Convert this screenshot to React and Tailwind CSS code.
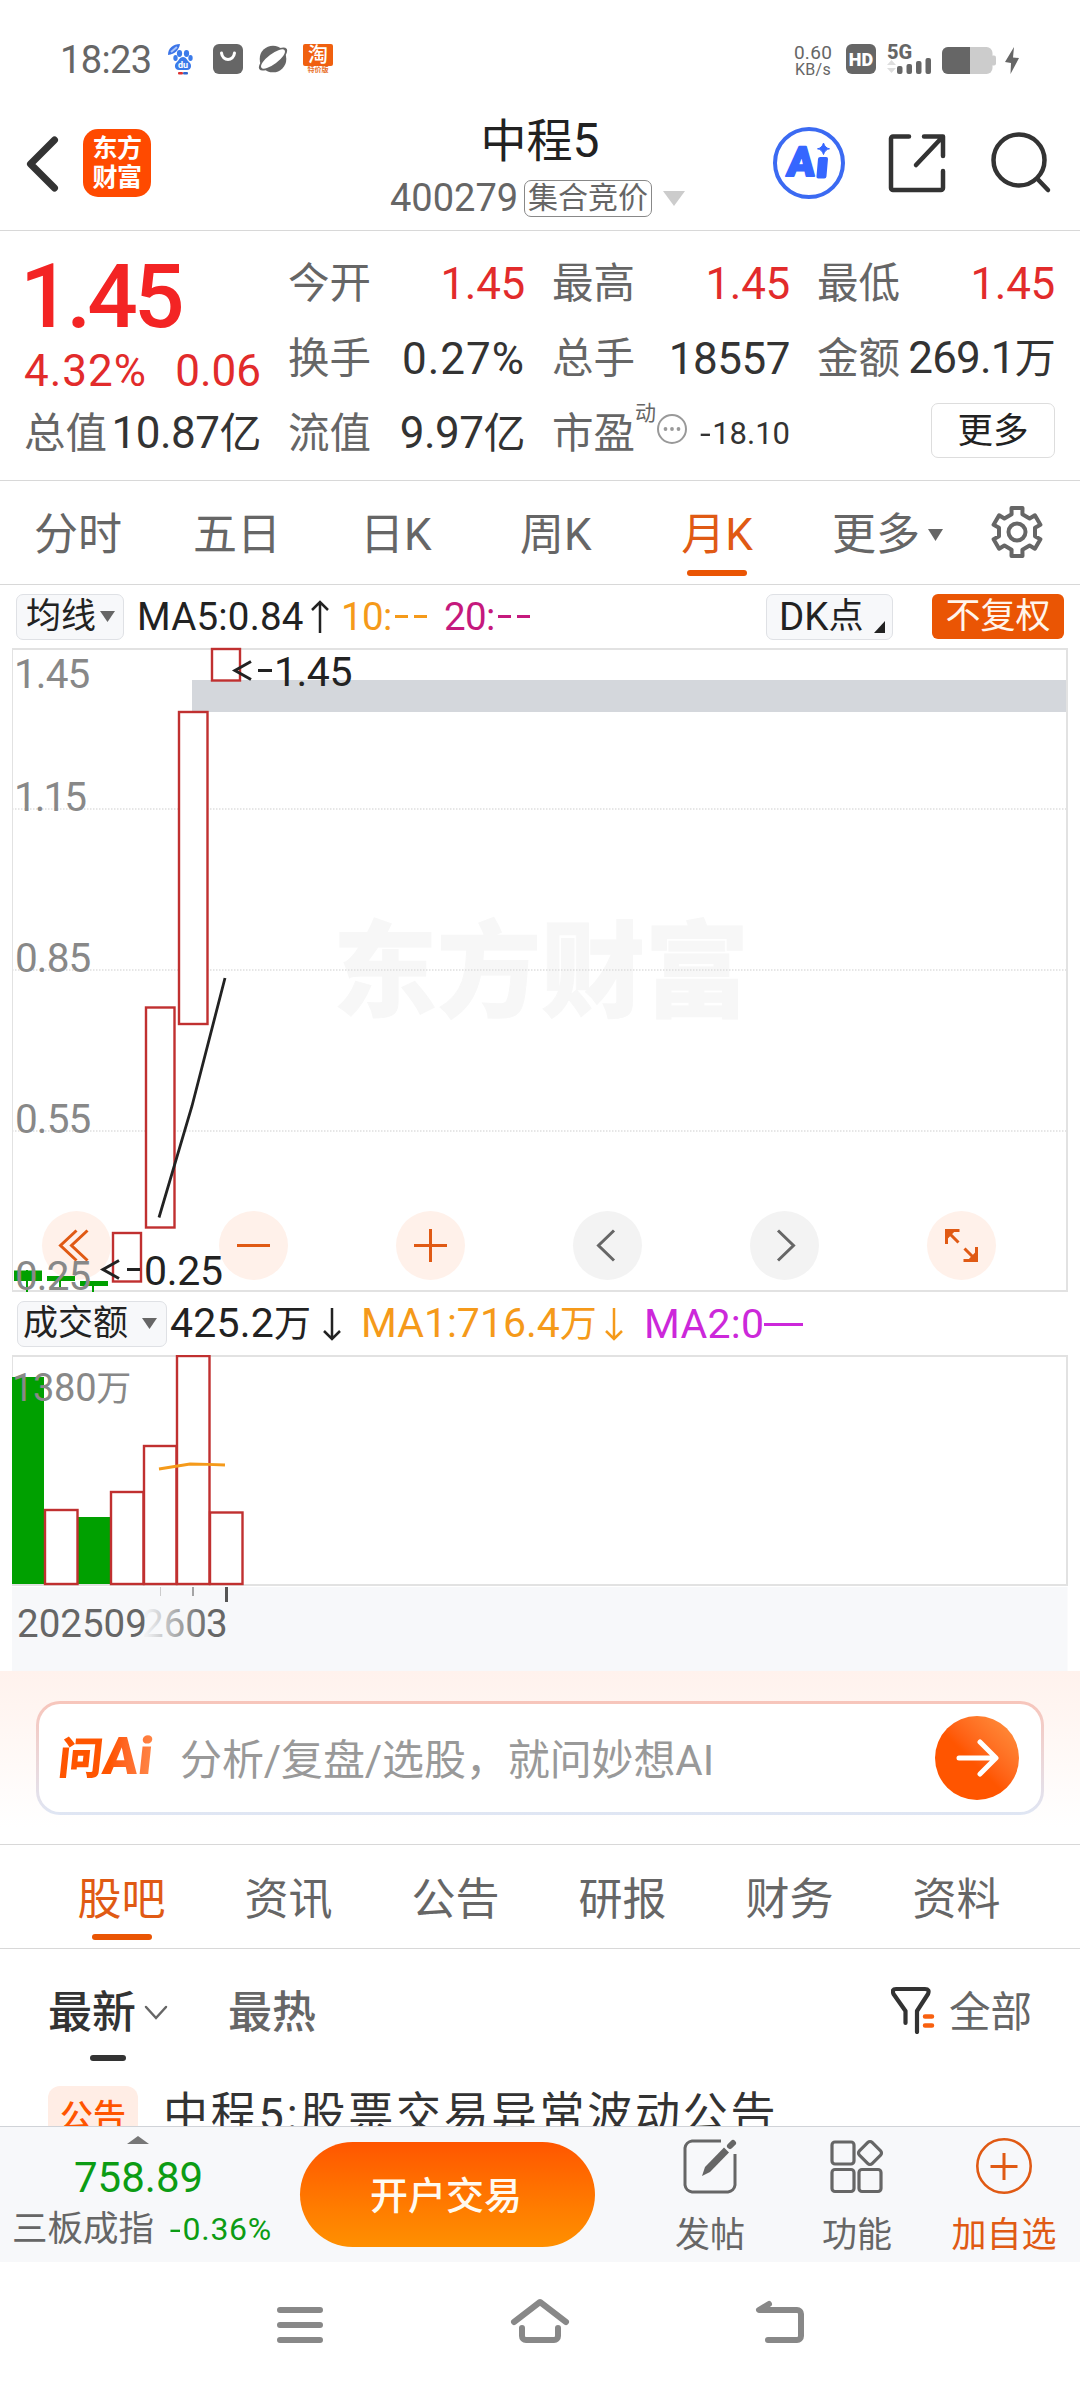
import React from "react";

function Triangle({ className, points = "0,0 15,0 7.5,11", w = 15, h = 11, fill = "#666" }) {
  return (
    <svg width={w} height={h} className={className}>
      <polygon points={points} fill={fill} />
    </svg>
  );
}

function StatusBar() {
  return (
    <div className="flex h-[110px] shrink-0 items-start pl-[60px] pt-[44px] text-[#666]">
      <div className="mt-px w-[108px] text-[38px] leading-[30px] tracking-[-0.6px]">18:23</div>
      <svg width="25" height="31" viewBox="0 0 25 31" className="shrink-0 overflow-visible">
        <path d="M0 11C0 4 5 0 12 0C11 6 7 10 0 11Z" fill="#3b74e8" />
        <path d="M3 8L9 3" stroke="#a9c4fa" strokeWidth="2" />
        <g fill="#3b7bea">
          <ellipse cx="11.5" cy="9.5" rx="2.6" ry="3.4" />
          <ellipse cx="18.5" cy="9.5" rx="2.6" ry="3.4" />
          <ellipse cx="7.5" cy="14" rx="2.2" ry="3" />
          <ellipse cx="22.5" cy="14" rx="2.2" ry="3" />
          <path d="M15 13C18 13 19 16 21 18C24 20 24 26 19 26C16 26 14 26 11 26C6 26 6 20 9 18C11 16 12 13 15 13Z" />
        </g>
        <text x="15" y="24" fontSize="9" fontWeight="700" textAnchor="middle" fill="#fff">du</text>
        <rect x="10" y="28" width="5" height="2.500" rx="1" fill="#d33" />
        <rect x="15" y="28" width="5" height="2.500" rx="1" fill="#36c" />
      </svg>
      <svg width="30" height="30" className="ml-[20px] shrink-0">
        <rect width="30" height="30" rx="6" fill="#666" />
        <path d="M8.500 9C9.500 17.500 20.500 17.500 21.500 9" stroke="#fff" strokeWidth="3" fill="none" strokeLinecap="round" />
      </svg>
      <svg width="30" height="30" viewBox="0 0 30 30" className="ml-[15px] shrink-0">
        <circle cx="15" cy="15" r="13.300" fill="#666" />
        <ellipse cx="15" cy="15" rx="17" ry="6.500" transform="rotate(-37 15 15)" fill="#666" />
        <ellipse cx="15" cy="15" rx="14.500" ry="5" transform="rotate(-37 15 15)" fill="#fff" />
      </svg>
      <div className="ml-[15px] flex w-[30px] flex-col items-center">
        <div className="h-[22px] w-[30px] rounded-[2px] bg-[#f0600f] text-center text-[20px] font-medium leading-[22px] text-white">淘</div>
        <div className="whitespace-nowrap text-[7px] font-bold leading-[9px] text-[#e8702a]">特价版</div>
      </div>
      <div className="ml-[459px] w-[42px] text-center">
        <div className="text-[19px] leading-[18px] tracking-[0.3px]">0.60</div>
        <div className="text-[16px] leading-[16px] tracking-[0.3px]">KB/s</div>
      </div>
      <div className="ml-[12px] flex h-[30px] w-[30px] items-center justify-center rounded-[6px] bg-[#666] text-[18px] font-black text-white">HD</div>
      <svg width="46" height="31" viewBox="0 0 46 31" className="ml-[11px] shrink-0 overflow-visible">
        <text x="0" y="14.500" fontSize="20" fontWeight="800" fill="#666">5G</text>
        <polygon points="0,21 9,21 4.500,16" fill="#ddd" />
        <polygon points="0,24 9,24 4.500,29" fill="#ddd" />
        <g fill="#666">
          <rect x="10" y="22" width="5.500" height="8" rx="2" />
          <rect x="19.500" y="20" width="5.500" height="10" rx="2" />
          <rect x="29" y="17" width="5.500" height="13" rx="2" />
          <rect x="38.500" y="14" width="5.500" height="16" rx="2" />
        </g>
      </svg>
      <svg width="55" height="28" className="ml-[9px] mt-[3px] shrink-0">
        <rect x="0" y="0" width="50.500" height="27" rx="6" fill="#ccc" />
        <rect x="49" y="8.500" width="5" height="10" rx="2" fill="#ccc" />
        <path d="M6 0H28V27H6A6 6 0 0 1 0 21V6A6 6 0 0 1 6 0Z" fill="#666" />
      </svg>
      <svg width="14" height="28" className="ml-[8px] mt-[3px] shrink-0">
        <polygon points="9,0 0,15 6,16 5.500,27 14,11 8,10.500" fill="#666" />
      </svg>
    </div>
  );
}

function Header() {
  return (
    <div className="flex h-[121px] shrink-0 items-start border-b border-[#d8d8d8]">
      <div className="flex w-[390px] items-center pl-[25px] pt-[19px]">
        <svg width="36" height="60" className="mt-px">
          <path d="M29.500 6L5.500 30L29.500 54" fill="none" stroke="#333" strokeWidth="7" strokeLinecap="round" strokeLinejoin="round" />
        </svg>
        <div className="ml-[22px] flex h-[68px] w-[68px] flex-col items-center justify-center rounded-[15px] bg-[#ff4a00] text-[25px] font-bold leading-[29px] tracking-[-0.5px] text-white">
          <span>东方</span>
          <span>财富</span>
        </div>
      </div>
      <div className="w-[300px]">
        <div className="h-[60px] text-center text-[46px] leading-[61px] text-[#222]">中程<span className="text-[48px]">5</span></div>
        <div className="mt-[9px] flex h-[38px] items-center text-[#666]">
          <span className="w-[134px] text-[38px] leading-[38px]">400279</span>
          <span className="flex h-[37px] w-[128px] items-center justify-center rounded-[7px] border-[1.5px] border-[#888] text-[30px] leading-[36px]">集合竞价</span>
          <Triangle className="ml-[11px]" points="0,0 22,0 11,15" w={22} h={15} fill="#ccc" />
        </div>
      </div>
      <div className="flex flex-1 items-center pl-[82px] pt-[16px]">
        <svg width="74" height="74" viewBox="0 0 74 74">
          <circle cx="37" cy="37" r="34" fill="none" stroke="#3b6af2" strokeWidth="4" />
          <g transform="translate(14 50) skewX(-5)" fill="#3566ff" stroke="#3566ff" strokeWidth="2" strokeLinejoin="round">
            <text x="0" y="0" fontSize="41" fontWeight="900">A</text>
            <rect x="31.500" y="-18" width="8" height="19.500" rx="1" />
          </g>
          <path d="M51.500 17Q53 22 57.500 22.800Q53 23.500 51.500 28.500Q50 23.500 45.500 22.800Q50 22 51.500 17Z" fill="#3566ff" stroke="#3566ff" />
        </svg>
        <svg width="58" height="60" viewBox="0 0 58 60" className="ml-[42px]">
          <g fill="none" stroke="#333" strokeWidth="4.500" strokeLinecap="round" strokeLinejoin="round">
            <path d="M21 3.500H5A2 2 0 0 0 3 5.500V55A2 2 0 0 0 5 57H53A2 2 0 0 0 55 55V38" />
            <path d="M36 3.500H55V23M54 4.500L28 32" />
          </g>
        </svg>
        <svg width="62" height="62" viewBox="0 0 62 62" className="ml-[44px]">
          <g fill="none" stroke="#333" strokeWidth="4.500" strokeLinecap="round">
            <circle cx="29" cy="28" r="25.500" />
            <path d="M47.500 47L58 58" />
          </g>
        </svg>
      </div>
    </div>
  );
}

function Cell({ label, value, red, wide }) {
  return (
    <div className="flex h-[75px] items-center justify-between whitespace-nowrap leading-[50px]">
      <span className="text-[41.5px] text-[#666]">{label}</span>
      <span className={red ? "text-[44px] tracking-[-0.3px] text-[#e22b2b]" : wide ? "text-[44px] tracking-[1px] text-[#333]" : "text-[44px] tracking-[-0.5px] text-[#333]"}>{value}</span>
    </div>
  );
}

function Quote() {
  return (
    <div className="flex h-[250px] shrink-0 gap-[27px] border-b border-[#d8d8d8] pl-[24px] pt-[15px]">
      <div className="w-[237px]">
        <div className="-ml-[4px] h-[100px] text-[89px] font-medium leading-[101px] tracking-[-4px] text-[#f32424]">1.45</div>
        <div className="flex h-[50px] items-center justify-between text-[44px] leading-[50px] text-[#e22b2b]">
          <span className="tracking-[1px]">4.32%</span>
          <span>0.06</span>
        </div>
        <Cell label="总值" value={<span className="text-[#333]">10.87<span className="text-[42px]">亿</span></span>} />
      </div>
      <div className="w-[237px]">
        <Cell label="今开" value="1.45" red />
        <Cell label="换手" value="0.27%" wide />
        <Cell label="流值" value={<span>9.97<span className="text-[42px]">亿</span></span>} />
      </div>
      <div className="w-[238px]">
        <Cell label="最高" value="1.45" red />
        <Cell label="总手" value="18557" />
        <div className="flex h-[75px] items-center whitespace-nowrap leading-[50px]">
          <span className="text-[41.5px] text-[#666]">市盈</span>
          <span className="mb-[42px] ml-0 text-[21px] leading-[22px] text-[#666]">动</span>
          <svg width="32" height="32" className="mb-[10px]">
            <circle cx="16" cy="16" r="14" fill="none" stroke="#999" strokeWidth="2" />
            <circle cx="9.500" cy="16" r="1.900" fill="#999" />
            <circle cx="16" cy="16" r="1.900" fill="#999" />
            <circle cx="22.500" cy="16" r="1.900" fill="#999" />
          </svg>
          <span className="ml-auto text-[31px] text-[#333]"><span className="mr-[3px] inline-block scale-x-125">-</span>18.10</span>
        </div>
      </div>
      <div className="w-[238px]">
        <Cell label="最低" value="1.45" red />
        <Cell label="金额" value={<span className="tracking-[-0.8px]">269.1<span className="text-[41px]">万</span></span>} />
        <div className="flex h-[69px] items-center justify-end">
          <span className="flex h-[55px] w-[124px] items-center justify-center rounded-[7px] border border-[#ddd] text-[35.5px] leading-[50px] text-[#222]">更多</span>
        </div>
      </div>
    </div>
  );
}

function gearPath() {
  const pts = [];
  for (let i = 0; i < 6; i++) {
    const base = -90 + i * 60;
    for (const [off, r] of [[-17, 18.5], [-13, 24.5], [13, 24.5], [17, 18.5]]) {
      const a = ((base + off) * Math.PI) / 180;
      pts.push(`${(27 + r * Math.cos(a)).toFixed(1)} ${(27 + r * Math.sin(a)).toFixed(1)}`);
    }
  }
  return `M${pts.join("L")}Z`;
}

function PeriodTabs() {
  return (
    <div className="flex h-[104px] shrink-0 items-start border-b border-[#d8d8d8] pt-[22px] text-[44px] leading-[64px] text-[#666]">
      <span className="w-[160px] pl-[34px]">分时</span>
      <span className="w-[160px] pl-[33px]">五日</span>
      <span className="w-[160px] pl-[40px]">日K</span>
      <span className="w-[160px] pl-[40px]">周K</span>
      <span className="flex w-[154px] flex-col items-center text-[#e05a14]">
        <span>月K</span>
        <span className="mt-[3px] h-[6px] w-[60px] rounded-[3px] bg-[#ea5504]" />
      </span>
      <span className="flex w-[196px] items-center pl-[38px]">更多<Triangle className="ml-[8px]" points="0,0 15,0 7.5,12" h={12} /></span>
      <svg width="54" height="54" className="mt-[2px]">
        <path d={gearPath()} fill="none" stroke="#666" strokeWidth="4" strokeLinejoin="round" />
        <circle cx="27" cy="27" r="8.500" fill="none" stroke="#666" strokeWidth="4" />
      </svg>
    </div>
  );
}

function LongArrow({ up, color, className }) {
  return (
    <svg width="20" height="36" className={className}>
      <path d={up ? "M10 34V4M2 11L10 3L18 11" : "M10 2V33M2 25L10 33L18 25"} stroke={color} strokeWidth="2.500" fill="none" />
    </svg>
  );
}

function DashPair() {
  return (
    <span className="flex items-center gap-[6px] pl-[3px]">
      <span className="h-[3px] w-[13px] bg-current" />
      <span className="h-[3px] w-[13px] bg-current" />
    </span>
  );
}

function MaRow() {
  return (
    <div className="flex h-[63px] shrink-0 items-center whitespace-nowrap pl-[16px] text-[38.5px] leading-[46px] text-[#222]">
      <span className="flex h-[46px] w-[108px] items-center rounded-[7px] border border-[#dfe1e5] bg-[#f7f8fa] pl-[9px] text-[35px]">
        均线<Triangle className="ml-[4px]" />
      </span>
      <span className="ml-[13px] w-[170px] tracking-[0.2px]">MA5:0.84</span>
      <LongArrow up color="#222" className="ml-[3px]" />
      <span className="ml-[11px] flex w-[103px] tracking-[-0.6px] text-[#f59a1a]">10:<DashPair /></span>
      <span className="flex tracking-[-0.6px] text-[#c5197d]">20:<DashPair /></span>
      <span className="ml-auto flex h-[46px] w-[127px] items-center rounded-[7px] border border-[#dfe1e5] bg-[#f7f8fa] pl-[12px]">
        DK<span className="text-[35px]">点</span>
        <Triangle className="ml-[11px] mt-[20px]" points="11,0 11,12 0,12" w={11} h={12} fill="#222" />
      </span>
      <span className="ml-[39px] mr-[16px] flex h-[45px] w-[132px] items-center justify-center rounded-[6px] bg-[#ea5504] text-[35px] text-[#fff5ec]">不复权</span>
    </div>
  );
}

const controls = [
  { x: 76.5, warm: true, d: "M0 -15L-16 0L0 15M11 -15L-5 0L11 15" },
  { x: 253.5, warm: true, d: "M-16.500 0H16.500" },
  { x: 430.5, warm: true, d: "M-16.500 0H16.500M0 -16.500V16.500" },
  { x: 607.5, warm: false, d: "M6.500 -15L-9 0L6.500 15" },
  { x: 784.5, warm: false, d: "M-6.500 -15L9 0L-6.500 15" },
  { x: 961.5, warm: true, d: "M-2 -15H-15V-1.500M-15 -15L-3 -3M2 15H15V1.500M15 15L3 3" },
];

function CandleChart() {
  return (
    <svg width="1080" height="644" viewBox="0 648 1080 644" className="shrink-0 overflow-visible">
      <text x="333" y="1009" fontSize="104" fontWeight="900" fill="#f7f7f7" stroke="#f7f7f7" strokeWidth="1">东方财富</text>
      {[809, 970, 1131].map((y) => (
        <line key={y} x1="12" x2="1067" y1={y} y2={y} stroke="#dedede" strokeWidth="1.500" strokeDasharray="1.500 1.500" />
      ))}
      <rect x="192" y="680" width="875" height="32" fill="#d4d7dc" />
      <path d="M12 649H1068M12 1291H1068" stroke="#e2e2e2" strokeWidth="2" />
      <path d="M12.500 648V1292" stroke="#e2e2e2" />
      <path d="M1067 648V1292" stroke="#e2e2e2" strokeWidth="2" />
      {controls.map((c) => (
        <g key={c.x} transform={`translate(${c.x} 1245.500)`}>
          <circle r="34.500" fill={c.warm ? "#fff1ea" : "#f3f3f3"} />
          <path d={c.d} fill="none" stroke={c.warm ? "#e05a14" : "#666"} strokeWidth="3" />
          {c.x > 900 && <path d="M-15.500 -16V-5L-5 -16ZM15.500 16V5L5 16Z" fill="#e05a14" />}
        </g>
      ))}
      <g fill="#00a000">
        <rect x="14" y="1270.500" width="28" height="10.500" />
        <rect x="26" y="1270" width="2" height="22" />
        <rect x="47" y="1276" width="28" height="5" />
        <rect x="59" y="1276" width="2" height="11" />
        <rect x="80" y="1281" width="28" height="5" />
        <rect x="92" y="1281" width="2" height="11" />
      </g>
      <g fill="#fff" stroke="#c03030" strokeWidth="2.400">
        <rect x="212" y="649" width="28" height="31.500" />
        <rect x="179" y="712" width="28.500" height="312" />
        <rect x="146" y="1007.500" width="28.500" height="220" />
        <rect x="113" y="1233" width="28" height="48.500" />
      </g>
      <path d="M159 1217.500L192 1106L225 978" fill="none" stroke="#222" strokeWidth="2.800" />
      <g fontSize="40.500" fill="#888" letterSpacing="-0.900">
        <text x="14" y="688">1.45</text>
        <text x="14" y="811" letterSpacing="-2">1.15</text>
        <text x="15" y="972">0.85</text>
        <text x="15" y="1132.500">0.55</text>
        <text x="15" y="1289.500">0.25</text>
      </g>
      <g fontSize="41" fill="#222">
        <path d="M251 661.500L235 670.500L251 679.500M258 670.500H272" fill="none" stroke="#222" strokeWidth="3" />
        <text x="274" y="686" letterSpacing="-0.500">1.45</text>
        <path d="M119 1260.500L103 1269.500L119 1278.500M127 1269.500H140" fill="none" stroke="#222" strokeWidth="3" />
        <text x="144" y="1284.500" letterSpacing="-0.300">0.25</text>
      </g>
    </svg>
  );
}

function VolumeRow() {
  return (
    <div className="flex h-[63px] shrink-0 items-center whitespace-nowrap pl-[17px] text-[41px] leading-[46px] text-[#222]">
      <span className="flex h-[46px] w-[150px] items-center rounded-[7px] border border-[#dfe1e5] bg-[#f7f8fa] pl-[5px] text-[35px]">
        成交额<Triangle className="ml-[14px]" />
      </span>
      <span className="ml-[3px] w-[149px] tracking-[0.2px]">425.2<span className="text-[37px]">万</span></span>
      <LongArrow color="#222" className="ml-[3px]" />
      <span className="ml-[19px] w-[237px] text-[#f59a1a]">MA1:716.4<span className="text-[37px]">万</span></span>
      <LongArrow color="#f59a1a" className="ml-[6px]" />
      <span className="ml-[20px] flex items-center tracking-[0.3px] text-[#cc28da]">MA2:0<span className="mt-[2px] h-[3px] w-[39px] bg-current" /></span>
    </div>
  );
}

const volumes = [
  { x: 44.5, top: 1510 },
  { x: 110.5, top: 1492 },
  { x: 143.5, top: 1446 },
  { x: 176.5, top: 1356 },
  { x: 209.5, top: 1512.5 },
];

function VolumeChart() {
  return (
    <svg width="1080" height="316" viewBox="0 1355 1080 316" className="shrink-0">
      <rect x="12" y="1587" width="1055.500" height="84" fill="#f7f8fa" />
      <path d="M12 1356H1068M12 1585H1068" stroke="#e2e2e2" strokeWidth="2" />
      <path d="M12.500 1355V1586" stroke="#e2e2e2" />
      <path d="M1067 1355V1586" stroke="#e2e2e2" strokeWidth="2" />
      <rect x="12" y="1377" width="32" height="207" fill="#00a000" />
      <rect x="78" y="1517" width="32" height="67" fill="#00a000" />
      {volumes.map((v) => (
        <rect key={v.x} x={v.x + 0.5} y={v.top} width="32.500" height={1584 - v.top} fill="#fff" stroke="#c03030" strokeWidth="2.400" />
      ))}
      <path d="M159 1469L190 1464L208 1464.300L225 1465" fill="none" stroke="#f59a1a" strokeWidth="2.800" />
      <text x="12" y="1400.500" fontSize="38" letterSpacing="-0.300" fill="#888">1380<tspan fontSize="35">万</tspan></text>
      <path d="M160.500 1587V1596" stroke="#ccc" />
      <path d="M193 1587V1596" stroke="#888" strokeWidth="1.500" />
      <path d="M226.500 1587V1602" stroke="#555" strokeWidth="3" />
      <defs>
        <linearGradient id="fade" gradientUnits="userSpaceOnUse" x1="147" x2="200" y1="0" y2="0">
          <stop offset="0" stopColor="#666" stopOpacity="0.050" />
          <stop offset="1" stopColor="#666" stopOpacity="0.900" />
        </linearGradient>
      </defs>
      <g fontSize="38.500" fill="#666">
        <text x="17" y="1637">202509</text>
        <text x="142" y="1637" fill="url(#fade)">260</text>
        <text x="206" y="1637">3</text>
      </g>
    </svg>
  );
}

function AskBar() {
  return (
    <div className="h-[174px] shrink-0 border-b border-[#d8d8d8] bg-linear-to-b from-[#fff2ed] to-white to-90% px-[36px] pt-[30px]">
      <div className="h-[114px] rounded-[24px] bg-linear-to-b from-[#f7c5bb] to-[#dfe6f4] p-[3px]">
        <div className="flex h-full items-center rounded-[21px] bg-white pl-[20px] pr-[22px]">
          <span className="w-[104px] -skew-x-6 whitespace-nowrap bg-linear-to-r from-[#ff5500] via-[#ff5500] to-[#ff9050] bg-clip-text text-[52px] font-black leading-[60px] text-transparent">
            <span className="text-[44px]">问</span>Ai
          </span>
          <span className="ml-[17px] mt-[5px] text-[42px] leading-[60px] tracking-[-0.1px] text-[#999]">分析/复盘/选股，就问妙想AI</span>
          <span className="ml-auto flex h-[84px] w-[84px] items-center justify-center rounded-full bg-linear-to-tr from-[#ff5500] from-45% to-[#ff9440]">
            <svg width="44" height="40" viewBox="0 0 44 40">
              <path d="M4 20H40M25 4L41 20L25 36" fill="none" stroke="#fff" strokeWidth="5" strokeLinecap="round" strokeLinejoin="round" />
            </svg>
          </span>
        </div>
      </div>
    </div>
  );
}

function SectionTabs() {
  return (
    <div className="flex h-[104px] shrink-0 items-start border-b border-[#d8d8d8] pl-[38px] pt-[23px] text-[44px] leading-[64px] text-[#666]">
      {["股吧", "资讯", "公告", "研报", "财务", "资料"].map((t, i) => (
        <span key={t} className={i === 0 ? "flex w-[167px] flex-col items-center text-[#e05a14]" : "flex w-[167px] flex-col items-center"}>
          {t}
          {i === 0 && <span className="mt-[2px] h-[6px] w-[60px] rounded-[3px] bg-[#ea5504]" />}
        </span>
      ))}
    </div>
  );
}

function Feed() {
  return (
    <div className="h-[177px] shrink-0 overflow-hidden">
      <div className="flex items-start pl-[48px] pt-[32px] text-[44px] font-medium leading-[64px]">
        <div className="flex w-[180px] flex-col text-[#333]">
          <span className="flex items-center">最新
            <svg width="24" height="16" className="ml-[8px]">
              <path d="M2 2L12 13L22 2" fill="none" stroke="#666" strokeWidth="2.500" strokeLinecap="round" />
            </svg>
          </span>
          <span className="ml-[42px] mt-[10px] h-[6px] w-[36px] rounded-[3px] bg-[#333]" />
        </div>
        <span className="text-[#666]">最热</span>
        <svg width="44" height="48" viewBox="0 0 44 48" className="ml-auto mt-[5px]">
          <path d="M14.500 37V25L2.500 8Q0.500 3 5 3H34Q39 3 37 8L26 25V46" fill="none" stroke="#333" strokeWidth="4.200" strokeLinecap="round" strokeLinejoin="round" />
          <path d="M34 30.500H41M34 39.500H41" stroke="#f8600f" strokeWidth="4.500" strokeLinecap="round" />
        </svg>
        <span className="ml-[14px] mr-[48px] text-[41.5px] font-normal text-[#666]">全部</span>
      </div>
      <div className="flex items-start pl-[48px] pt-[25px]">
        <span className="h-[60px] w-[90px] rounded-[12px] bg-[#ffede5] text-center text-[33px] font-medium leading-[61px] text-[#ff5500]">公告</span>
        <span className="ml-[25px] whitespace-nowrap text-[45px] leading-[57px] tracking-[2.8px] text-[#333]">中程5:股票交易异常波动公告</span>
      </div>
    </div>
  );
}

function Action({ label, children, className }) {
  return (
    <div className={className}>
      {children}
      <span className="text-[35px] leading-[44px]">{label}</span>
    </div>
  );
}

function BottomBar() {
  return (
    <div className="flex h-[136px] shrink-0 border-t border-[#d0d3d8] bg-[#f7f8fa]">
      <div className="w-[300px] pl-[12px]">
        <Triangle className="ml-[115px] mt-[9px]" points="0,8 22,8 11,0" w={22} h={8} fill="#777" />
        <div className="mt-[9px] pl-[62px] text-[42px] leading-[50px] text-[#0c9c14]">758.89</div>
        <div className="mt-[2px] flex items-center whitespace-nowrap leading-[48px] text-[#666]">
          <span className="text-[35.5px]">三板成指</span>
          <span className="ml-[17px] text-[32px] tracking-[0.7px] text-[#0c9c14]"><span className="mr-[2px] inline-block scale-x-125">-</span>0.36%</span>
        </div>
      </div>
      <div className="mt-[15px] flex h-[105px] w-[295px] items-center justify-center rounded-full bg-linear-to-b from-[#ff5500] to-[#ff9000] pr-[3px] text-[38px] font-medium leading-[60px] text-[#fffaf0]"><span className="mt-[2px]">开户交易</span></div>
      <Action label="发帖" className="ml-[35px] flex w-[160px] flex-col items-center pt-[10px] text-[#666]">
        <svg width="58" height="58" viewBox="0 0 58 58" className="mb-[19px]">
          <path d="M40 4H11A8 8 0 0 0 4 11V48A8 8 0 0 0 11 55H47A8 8 0 0 0 54 48V17" fill="none" stroke="#666" strokeWidth="3" />
          <path d="M21 39L24 30L43 10.500L48 15.500L29 35Z" fill="#666" />
          <path d="M49 9L52 6" stroke="#666" strokeWidth="6" strokeLinecap="round" />
        </svg>
      </Action>
      <Action label="功能" className="-ml-[5px] flex w-[144px] flex-col items-center pt-[10px] text-[#666]">
        <svg width="56" height="58" viewBox="0 0 56 58" className="mb-[19px]">
          <g fill="none" stroke="#666" strokeWidth="3.200">
            <rect x="3" y="5" width="22" height="22" rx="3" />
            <rect x="3" y="32.500" width="22" height="22" rx="3" />
            <rect x="30" y="32.500" width="22" height="22" rx="3" />
            <rect x="32" y="7" width="18" height="18" rx="3" transform="rotate(45 41 16)" />
          </g>
        </svg>
      </Action>
      <Action label="加自选" className="flex w-[150px] flex-col items-center pt-[10px] text-[#e05a14]">
        <svg width="58" height="58" viewBox="0 0 58 58" className="mb-[19px]">
          <circle cx="29" cy="29" r="26.700" fill="none" stroke="#e05a14" strokeWidth="2.600" />
          <path d="M15.500 29.500H42.500M29 16V43" stroke="#e05a14" strokeWidth="3" />
        </svg>
      </Action>
    </div>
  );
}

function SystemNav() {
  return (
    <div className="flex h-[126px] shrink-0 items-start justify-center gap-[180px] pt-[34px]">
      <svg width="60" height="52" viewBox="0 0 60 52">
        <path d="M10 14H50M10 29H50M10 44H50" stroke="#888" strokeWidth="6" strokeLinecap="round" />
      </svg>
      <svg width="60" height="52" viewBox="0 0 60 52">
        <g fill="none" stroke="#888" strokeWidth="6" strokeLinecap="round" strokeLinejoin="round">
          <path d="M4 26L30 6L56 26" />
          <path d="M12 32V40A4 4 0 0 0 16 44H44A4 4 0 0 0 48 40V32" />
        </g>
      </svg>
      <svg width="60" height="52" viewBox="0 0 60 52">
        <path d="M19 8L9 14H47A4 4 0 0 1 51 18V40A4 4 0 0 1 47 44H18" fill="none" stroke="#888" strokeWidth="6" strokeLinecap="round" strokeLinejoin="round" />
      </svg>
    </div>
  );
}

export default function App() {
  return (
    <div className="flex h-[2388px] w-[1080px] flex-col overflow-hidden bg-white font-[Roboto,'Noto_Sans_CJK_SC',sans-serif]">
      <StatusBar />
      <Header />
      <Quote />
      <PeriodTabs />
      <MaRow />
      <CandleChart />
      <VolumeRow />
      <VolumeChart />
      <AskBar />
      <SectionTabs />
      <Feed />
      <BottomBar />
      <SystemNav />
    </div>
  );
}
